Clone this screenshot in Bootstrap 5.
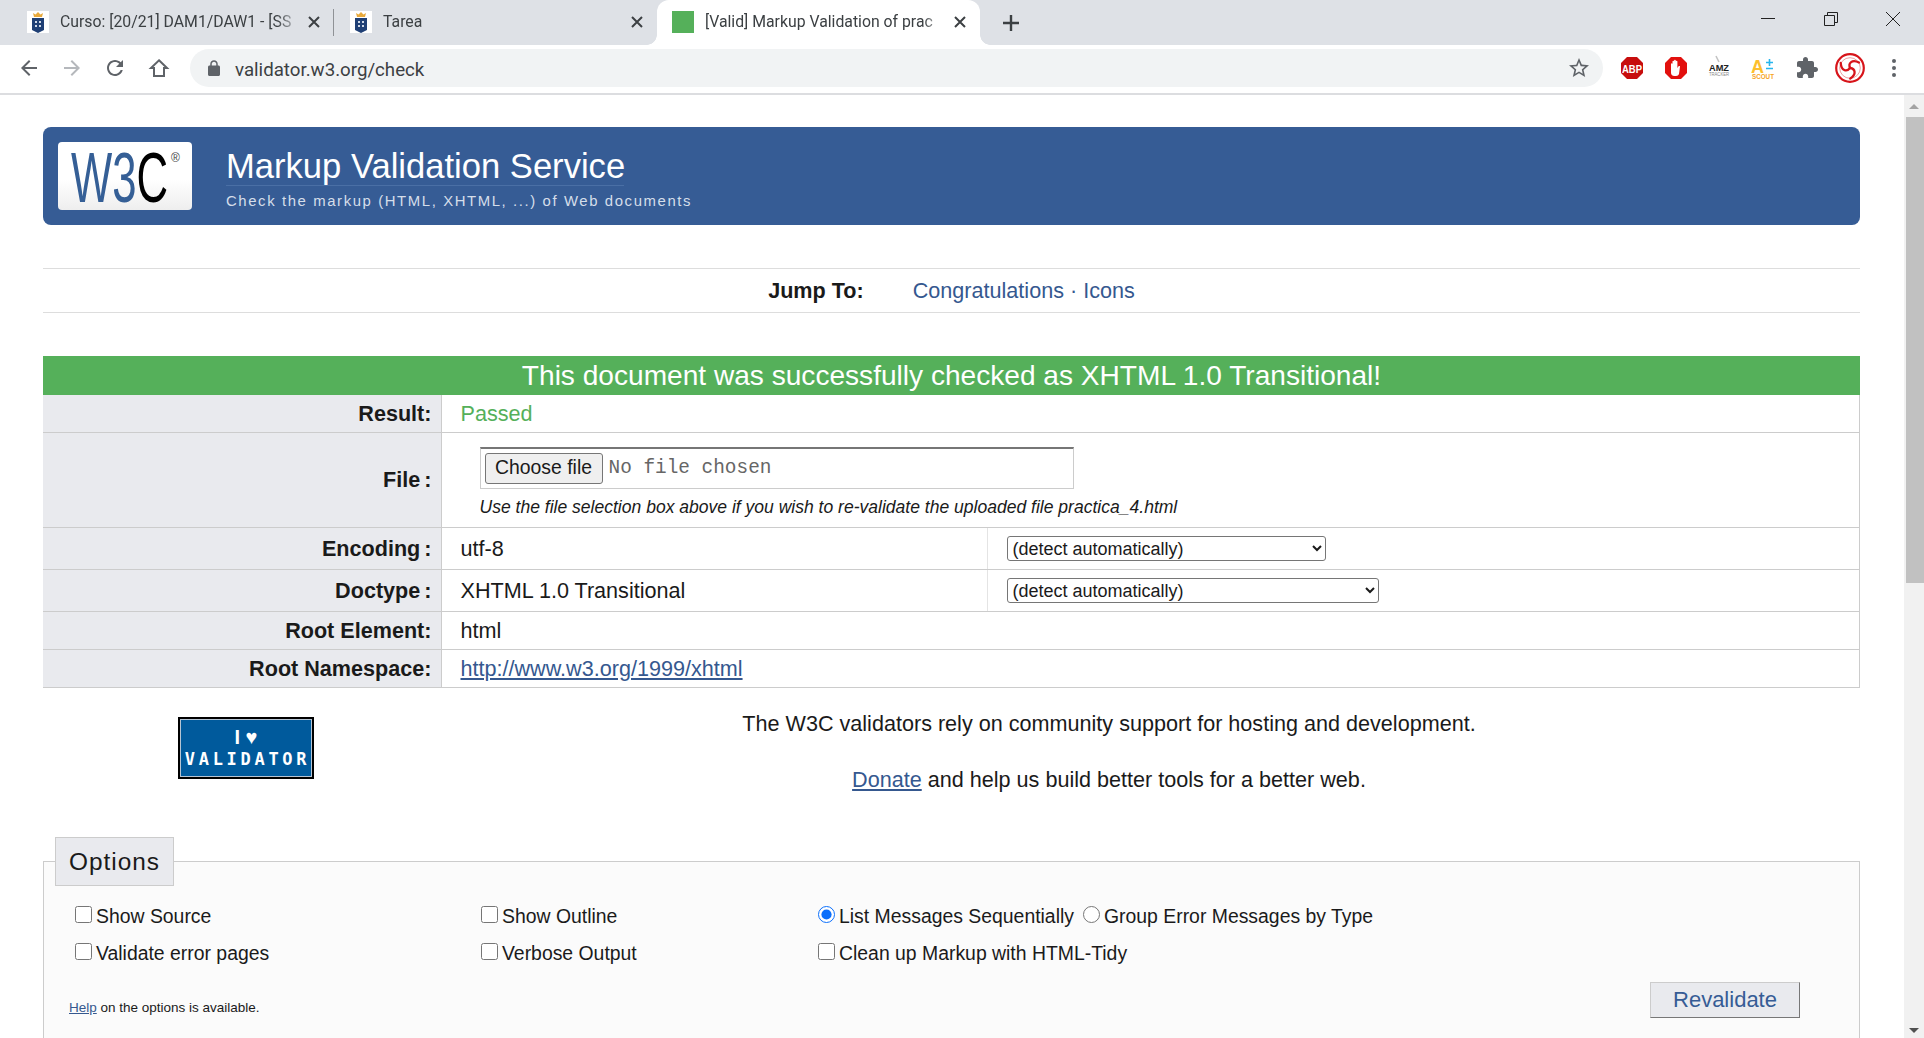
<!DOCTYPE html>
<html lang="en">
<head>
<meta charset="utf-8">
<title>[Valid] Markup Validation of practica_4.html</title>
<link href="https://cdn.jsdelivr.net/npm/bootstrap@5.3.0/dist/css/bootstrap.min.css" rel="stylesheet">
<script src="https://cdn.jsdelivr.net/npm/bootstrap@5.3.0/dist/js/bootstrap.bundle.min.js"></script>
<style>
html,body{height:100%;overflow:hidden;background:#fff}
body{font-family:"Liberation Sans",Arial,sans-serif;color:#1a1a1a;font-size:21.6px}
.shell{height:1038px;overflow:hidden}
.tabstrip{height:45px;background:#dee1e6;flex:none}
.tabitem{height:45px;padding:0 13px 2px 27px;width:334px;flex:none;position:relative;font:15.8px Roboto,sans-serif;color:#3c4043}
.tabitem.second{width:323px;padding-left:16px}
.tabitem.second::before{content:"";position:absolute;left:-1px;top:9px;height:27px;border-left:1px solid #8f9296}
.tabitem.current{width:323px;padding-left:15px;background:#fff;border-radius:12px 12px 0 0;margin-right:16px}
.tabitem.current::before,.tabitem.current::after{content:"";position:absolute;bottom:0;width:10px;height:10px;background:radial-gradient(circle at 0 0,#dee1e6 9.5px,#fff 10px)}
.tabitem.current::before{left:-10px}
.tabitem.current::after{right:-10px;background:radial-gradient(circle at 100% 0,#dee1e6 9.5px,#fff 10px)}
.fav{width:22px;height:22px;flex:none}
.favgreen{background:#55b05a}
.tabname{flex:1 1 0;min-width:0;white-space:nowrap;overflow:hidden;margin-left:11px;-webkit-mask-image:linear-gradient(to right,#000 90%,transparent 100%);mask-image:linear-gradient(to right,#000 90%,transparent 100%)}
.tabclose{width:14px;height:14px;flex:none;margin-left:6px}
.plus{margin-left:4px;width:22px;height:22px}
.winbtns{margin-left:auto;width:163px;padding-right:24px;padding-top:12px}
.toolrow{height:50px;flex:none;background:#fff;border-bottom:2px solid #dcdde0;padding:0 0 2px 0}
.navbtn{width:24px;height:24px;flex:none}
.navslot{width:43.3px;flex:none;display:flex;justify-content:center}
.navslots{padding-left:7px;width:190px;flex:none}
.urlpill{width:1413px;height:38px;background:#f1f3f4;border-radius:19px;padding:0 12px 0 18px;font:18.7px Roboto,sans-serif;color:#3c4043;flex:none}
.urlpill svg{flex:none}
.urltext{margin-left:15px;padding-top:3px}
.extslots{padding-left:7px}
.extslot{width:43.7px;height:36px;flex:none;display:flex;align-items:center;justify-content:center}
.pagearea{height:943px;min-height:0}
.maincol{flex:1 1 0;min-width:0;padding:32px 44px 0 43px;overflow:hidden}
.scrolltrack{width:20px;flex:none;background:#f1f1f1;height:943px}
.scrollup,.scrolldown{flex:none;display:flex;align-items:center;justify-content:center}
.scrollup{height:22px}
.scrolldown{margin-top:auto;height:16px}
.scrollthumb{height:466px;margin-left:2px;background:#c1c1c1;flex:none}
.banner{background:#365c95;height:98px;border-radius:8px;padding:15px;color:#fff}
.logobox{width:134px;height:68px;border-radius:4px;background:linear-gradient(#fff 55%,#eee);flex:none}
.logobox svg{overflow:visible;display:block}
.bannertext{margin-left:34px;margin-top:5px}
.bannertitle{font-size:34.6px;line-height:38px;border-bottom:1px solid #4a6fa5;width:398px;white-space:nowrap;font-weight:400;margin:0}
.bannersub{font-size:14.9px;letter-spacing:1.6px;color:#d5deea;line-height:20px;margin:5px 0 0;white-space:nowrap}
.jumpbar{margin-top:43px;height:45px;border-top:1px solid #ddd;border-bottom:1px solid #ddd;padding-top:2px}
.jumpbar b{margin-right:49px}
.jumplink,.doclink{color:#35588f}
.jumplink{text-decoration:none}
.jumpsep{margin:0 6px;color:#35588f}
.okbar{margin-top:43px;background:#55b05a;color:#fff;height:39px;font-size:28.1px;line-height:39px;text-align:center}
.restable{width:100%;border-collapse:collapse;table-layout:fixed;margin:0;color:#1a1a1a;font-size:21.6px;line-height:26px}
.colhead{width:398px}
.colmid{width:546px}
.restable th{background:#e9eaee;text-align:right;padding:2px 9px 0 0;border:solid #ccc;border-width:0 1px 1px 0;font-weight:700}
.restable th.tightcolon{word-spacing:-2px}
.restable td{padding:2px 0 0 19px;border:solid #ccc;border-width:0 1px 1px 0;vertical-align:middle}
.restable .midcell{border-right-color:#e4e4e4}
.restable .filerow th,.restable .filerow td,.restable td.pickcell{padding-top:0}
.r37{height:37px}.r95{height:95px}.r42{height:42px}.r38{height:38px}
.passtext{color:#55b05a}
.filebox{width:594px;height:42px;margin:5px 0 0 19px;border:1px solid #ccc;border-top:2px solid #767676;display:flex;align-items:center;padding:0 0 1px 4px;background:#fff;font:19.4px "Liberation Mono",monospace;color:#666}
.filebtn{font:19.4px/1 "Liberation Sans",Arial,sans-serif;height:31px;width:118px;padding:0;border:1px solid #767676;border-radius:3px;background:#efefef;color:#1a1a1a;margin-right:6px;flex:none}
.filenote{font-size:17.55px;font-style:italic;margin:8px 0 0 19px;line-height:20px;white-space:nowrap}
.detectpick{height:25px;font:18px/1 "Liberation Sans",Arial,sans-serif;border:1px solid #767676;border-radius:3px;background:#fff;color:#1a1a1a;padding:1px 0 0 1px;display:block}
.pick1{width:319px}.pick2{width:372px}
.supportrow{margin-top:22px}
.supportleft{width:315px;flex:none;padding:7px 0 0 135px}
.heartbadge{width:136px;height:62px;padding-top:7px;background:#005a9c;border:2px solid #000;outline:1px solid #b5c4d3;outline-offset:-3px;color:#fff;font:700 17px/22px "DejaVu Sans Mono","Liberation Mono",monospace;text-align:center;flex:none}
.heartbadge span{display:block;white-space:nowrap}
.heartline{font-family:"Liberation Sans",Arial,sans-serif;font-size:20px}
.valline{letter-spacing:3.7px;margin-right:-3px}
.supporttext{flex:1 1 0;text-align:center;line-height:28px;margin:0}
.supporttext p{margin:0 0 28px}
.optbox{margin-top:15px;border:1px solid #ccc;padding:0 11px 60px;background:#fbfbfb}
.optbox legend{float:none;width:auto;margin:0;background:#e9eaee;border:1px solid #ccc;font-size:24.4px;line-height:47px;height:49px;padding:0 13px;letter-spacing:1px}
.optgrid{display:grid;grid-template-columns:406px 337px 1fr;row-gap:9px;padding:16px 0 0 20px;font-size:19.4px;line-height:28px}
.optgrid label{display:flex;align-items:center;white-space:nowrap;margin:0}
.optgrid input{width:17px;height:17px;margin:0 4px 2px 0;flex:none;accent-color:#0b6ffb}
.radiopair{display:flex;gap:9px}
.optfoot{padding:15px 48px 0 14px;font-size:13.5px}
.optfoot a{color:#35588f}
.optnote{margin-top:16px}
.revbtn{width:150px;height:36px;background:#e9eaee;border:1px solid;border-color:#ccc #777 #777 #ccc;border-radius:0;padding:0;color:#365c95;font-size:22px;line-height:1}
</style>
</head>
<body>
<div class="shell d-flex flex-column">
  <div class="tabstrip d-flex align-items-center">
    <div class="tabitem d-flex align-items-center">
      <svg class="fav" viewBox="0 0 22 22"><rect width="22" height="22" fill="#fff"/><path d="M7 6 6 2l2.500 1.500L11 1l2.500 2.500L16 2l-1 4z" fill="#e8a93c"/><path d="M5 7h12v12l-6 3-6-3z" fill="#1f3f75"/><path d="M8 10h2v2H8zm4 0h2v2h-2zM8 14h2v2H8zm4 0h2v2h-2z" fill="#cfd8e6"/></svg>
      <span class="tabname">Curso: [20/21] DAM1/DAW1 - [SS</span>
      <svg class="tabclose" viewBox="0 0 14 14"><path d="M2 2l10 10M12 2 2 12" stroke="#3c4043" stroke-width="2"/></svg>
    </div>
    <div class="tabitem second d-flex align-items-center">
      <svg class="fav" viewBox="0 0 22 22"><rect width="22" height="22" fill="#fff"/><path d="M7 6 6 2l2.500 1.500L11 1l2.500 2.500L16 2l-1 4z" fill="#e8a93c"/><path d="M5 7h12v12l-6 3-6-3z" fill="#1f3f75"/><path d="M8 10h2v2H8zm4 0h2v2h-2zM8 14h2v2H8zm4 0h2v2h-2z" fill="#cfd8e6"/></svg>
      <span class="tabname">Tarea</span>
      <svg class="tabclose" viewBox="0 0 14 14"><path d="M2 2l10 10M12 2 2 12" stroke="#3c4043" stroke-width="2"/></svg>
    </div>
    <div class="tabitem current d-flex align-items-center">
      <span class="fav favgreen"></span>
      <span class="tabname">[Valid] Markup Validation of prac</span>
      <svg class="tabclose" viewBox="0 0 14 14"><path d="M2 2l10 10M12 2 2 12" stroke="#3c4043" stroke-width="2"/></svg>
    </div>
    <svg class="plus" viewBox="0 0 22 22"><path d="M11 3v16M3 11h16" stroke="#3c4043" stroke-width="2.400"/></svg>
    <div class="winbtns d-flex justify-content-between align-self-start">
      <svg width="14" height="14" viewBox="0 0 14 14"><path d="M0 6.500h14" stroke="#222"/></svg>
      <svg width="14" height="14" viewBox="0 0 14 14"><path d="M.5 3.500h10v10H.5zM3.500 3V.5h10v10H11" fill="none" stroke="#222"/></svg>
      <svg width="14" height="14" viewBox="0 0 14 14"><path d="M0 0l14 14M14 0 0 14" stroke="#222"/></svg>
    </div>
  </div>

  <div class="toolrow d-flex align-items-center">
    <div class="navslots d-flex align-items-center">
      <div class="navslot"><svg class="navbtn" viewBox="0 0 24 24"><path fill="#5f6368" d="M20 11H7.830l5.590-5.590L12 4l-8 8 8 8 1.410-1.410L7.830 13H20v-2z"/></svg></div>
      <div class="navslot"><svg class="navbtn" viewBox="0 0 24 24"><path fill="#b5b8bc" d="M12 4l-1.410 1.410L16.170 11H4v2h12.170l-5.580 5.590L12 20l8-8z"/></svg></div>
      <div class="navslot"><svg class="navbtn" viewBox="0 0 24 24"><path fill="#5f6368" d="M17.650 6.350C16.200 4.900 14.210 4 12 4c-4.420 0-7.990 3.580-7.990 8s3.570 8 7.990 8c3.730 0 6.840-2.550 7.730-6h-2.080c-.82 2.330-3.040 4-5.650 4-3.310 0-6-2.690-6-6s2.690-6 6-6c1.660 0 3.140.69 4.220 1.780L13 11h7V4l-2.350 2.350z"/></svg></div>
      <div class="navslot"><svg class="navbtn" viewBox="0 0 24 24"><path fill="none" stroke="#5f6368" stroke-width="2" d="M12 4.300 20 12h-3v8H7v-8H4z"/></svg></div>
    </div>
    <div class="urlpill d-flex align-items-center">
      <svg width="12" height="16" viewBox="4 1 16 21"><path fill="#5f6368" d="M18 8h-1V6c0-2.760-2.240-5-5-5S7 3.240 7 6v2H6c-1.100 0-2 .9-2 2v10c0 1.100.9 2 2 2h12c1.100 0 2-.9 2-2V10c0-1.100-.9-2-2-2zM9 6c0-1.660 1.340-3 3-3s3 1.340 3 3v2H9V6z"/></svg>
      <span class="urltext">validator.w3.org/check</span>
      <svg class="ms-auto" width="24" height="24" viewBox="0 0 24 24"><path fill="#5f6368" d="M22 9.240l-7.190-.62L12 2 9.190 8.630 2 9.240l5.460 4.730L5.820 21 12 17.270 18.180 21l-1.630-7.030L22 9.240zM12 15.400l-3.760 2.270 1-4.280-3.320-2.880 4.380-.38L12 6.100l1.710 4.040 4.380.38-3.320 2.880 1 4.280L12 15.400z"/></svg>
    </div>
    <div class="extslots d-flex align-items-center">
      <div class="extslot"><svg width="24" height="24" viewBox="0 0 24 24"><path fill="#c70d0d" d="M7 1h10l6 6v10l-6 6H7l-6-6V7z"/><text x="12" y="16.500" text-anchor="middle" font-family="Liberation Sans" font-weight="700" font-size="11" fill="#fff" textLength="20" lengthAdjust="spacingAndGlyphs">ABP</text></svg></div>
      <div class="extslot"><svg width="24" height="24" viewBox="0 0 24 24"><path fill="#e2100e" d="M7 1h10l6 6v10l-6 6H7l-6-6V7z"/><path fill="#fff" d="M7 11.500V8c0-1 1.500-1 1.500 0V5.500c0-1 1.600-1 1.600 0V4.500c0-1 1.700-1 1.700 0V5.500c0-1 1.600-1 1.600 0V12l1-1.500c.8-.9 2-.2 1.500.8L15 18c-.5 1-1.500 2-3 2h-1.500C8 20 7 18.500 7 16.500z"/></svg></div>
      <div class="extslot"><svg width="24" height="30" viewBox="0 0 24 30"><path d="M9 3l3 6" stroke="#c4c4c4" stroke-width="1.600"/><text x="12" y="18" text-anchor="middle" font-family="Liberation Sans" font-weight="700" font-size="9.500" fill="#222" textLength="20" lengthAdjust="spacingAndGlyphs">AMZ</text><text x="12" y="23" text-anchor="middle" font-family="Liberation Sans" font-size="4.500" fill="#888" textLength="20" lengthAdjust="spacingAndGlyphs">TRACKER</text></svg></div>
      <div class="extslot"><svg width="24" height="30" viewBox="0 0 24 30"><text x="0" y="20" font-family="Liberation Sans" font-weight="700" font-size="18" fill="#fdbf2d">A</text><path d="M18.500 6v7M15 9.500h7M15 15.500h7" stroke="#27b5ee" stroke-width="1.600" fill="none"/><text x="12" y="26" text-anchor="middle" font-family="Liberation Sans" font-weight="700" font-size="6.500" fill="#f7a325" textLength="22" lengthAdjust="spacingAndGlyphs">SCOUT</text></svg></div>
      <div class="extslot"><svg width="24" height="24" viewBox="0 0 24 24"><path fill="#5f6368" d="M20.500 11H19V7c0-1.100-.9-2-2-2h-4V3.500C13 2.120 11.880 1 10.500 1S8 2.120 8 3.500V5H4c-1.100 0-1.990.9-1.990 2v3.800H3.500c1.490 0 2.700 1.210 2.700 2.700s-1.210 2.700-2.700 2.700H2V20c0 1.100.9 2 2 2h3.800v-1.500c0-1.490 1.210-2.700 2.700-2.700 1.490 0 2.700 1.210 2.700 2.700V22H17c1.100 0 2-.9 2-2v-4h1.500c1.380 0 2.500-1.120 2.500-2.500S21.880 11 20.500 11z"/></svg></div>
      <div class="extslot"><svg width="30" height="30" viewBox="0 0 30 30"><circle cx="15" cy="15" r="13.800" fill="#fff" stroke="#d7141a" stroke-width="2.200"/><circle cx="15" cy="15" r="10.300" fill="none" stroke="#e8868a" stroke-width=".8"/><g fill="none" stroke="#d7141a" stroke-width="2.300" stroke-linecap="round"><path id="swirlarm" d="M15 15C13 10 17 6 24 9.500"/><use href="#swirlarm" transform="rotate(120 15 15)"/><use href="#swirlarm" transform="rotate(240 15 15)"/></g></svg></div>
      <div class="extslot"><svg width="6" height="20" viewBox="0 0 6 20"><circle cx="3" cy="3" r="2" fill="#5f6368"/><circle cx="3" cy="10" r="2" fill="#5f6368"/><circle cx="3" cy="17" r="2" fill="#5f6368"/></svg></div>
    </div>
  </div>

  <div class="pagearea d-flex">
    <main class="maincol">
      <div class="banner d-flex align-items-start">
        <div class="logobox">
          <svg width="134" height="68" viewBox="0 0 134 68">
            <text x="13" y="60" font-family="Liberation Sans" font-size="71" textLength="97" lengthAdjust="spacingAndGlyphs"><tspan fill="#355f96">W3</tspan><tspan fill="#000">C</tspan></text>
            <text x="113" y="20" font-family="Liberation Sans" font-size="12" fill="#444">®</text>
          </svg>
        </div>
        <div class="bannertext">
          <h1 class="bannertitle">Markup Validation Service</h1>
          <p class="bannersub">Check the markup (HTML, XHTML, ...) of Web documents</p>
        </div>
      </div>

      <nav class="jumpbar d-flex align-items-center justify-content-center">
        <b>Jump To:</b>
        <a class="jumplink" href="#ok">Congratulations</a><span class="jumpsep">·</span><a class="jumplink" href="#icons">Icons</a>
      </nav>

      <div class="okbar" id="ok">This document was successfully checked as XHTML 1.0 Transitional!</div>
      <table class="restable">
        <colgroup><col class="colhead"><col class="colmid"><col></colgroup>
        <tr class="r37"><th>Result:</th><td colspan="2" class="passtext">Passed</td></tr>
        <tr class="r95 filerow"><th class="tightcolon">File :</th><td colspan="2">
          <div class="filebox"><button type="button" class="filebtn">Choose file</button>No file chosen</div>
          <p class="filenote">Use the file selection box above if you wish to re-validate the uploaded file practica_4.html</p>
        </td></tr>
        <tr class="r42"><th class="tightcolon">Encoding :</th><td class="midcell">utf-8</td><td class="pickcell"><select class="detectpick pick1"><option>(detect automatically)</option></select></td></tr>
        <tr class="r42"><th class="tightcolon">Doctype :</th><td class="midcell">XHTML 1.0 Transitional</td><td class="pickcell"><select class="detectpick pick2"><option>(detect automatically)</option></select></td></tr>
        <tr class="r38"><th>Root Element:</th><td colspan="2">html</td></tr>
        <tr class="r38"><th>Root Namespace:</th><td colspan="2"><a class="doclink" href="#ns">http://www.w3.org/1999/xhtml</a></td></tr>
      </table>

      <div class="supportrow d-flex align-items-start">
        <div class="supportleft">
          <div class="heartbadge"><span class="heartline">I ♥</span><span class="valline">VALIDATOR</span></div>
        </div>
        <div class="supporttext">
          <p>The W3C validators rely on community support for hosting and development.</p>
          <p><a class="doclink" href="#donate">Donate</a> and help us build better tools for a better web.</p>
        </div>
      </div>

      <fieldset class="optbox">
        <legend>Options</legend>
        <div class="optgrid">
          <label><input type="checkbox">Show Source</label>
          <label><input type="checkbox">Show Outline</label>
          <div class="radiopair">
            <label><input type="radio" name="grp" checked>List Messages Sequentially</label>
            <label><input type="radio" name="grp">Group Error Messages by Type</label>
          </div>
          <label><input type="checkbox">Validate error pages</label>
          <label><input type="checkbox">Verbose Output</label>
          <label><input type="checkbox">Clean up Markup with HTML-Tidy</label>
        </div>
        <div class="optfoot d-flex justify-content-between align-items-start">
          <span class="optnote"><a href="#help">Help</a> on the options is available.</span>
          <button type="button" class="revbtn">Revalidate</button>
        </div>
      </fieldset>
    </main>
    <aside class="scrolltrack d-flex flex-column">
      <div class="scrollup"><svg width="10" height="5" viewBox="0 0 10 5"><path d="M5 0l5 5H0z" fill="#a3a3a3"/></svg></div>
      <div class="scrollthumb"></div>
      <div class="scrolldown"><svg width="10" height="5" viewBox="0 0 10 5"><path d="M5 5 0 0h10z" fill="#505050"/></svg></div>
    </aside>
  </div>
</div>
</body>
</html>
